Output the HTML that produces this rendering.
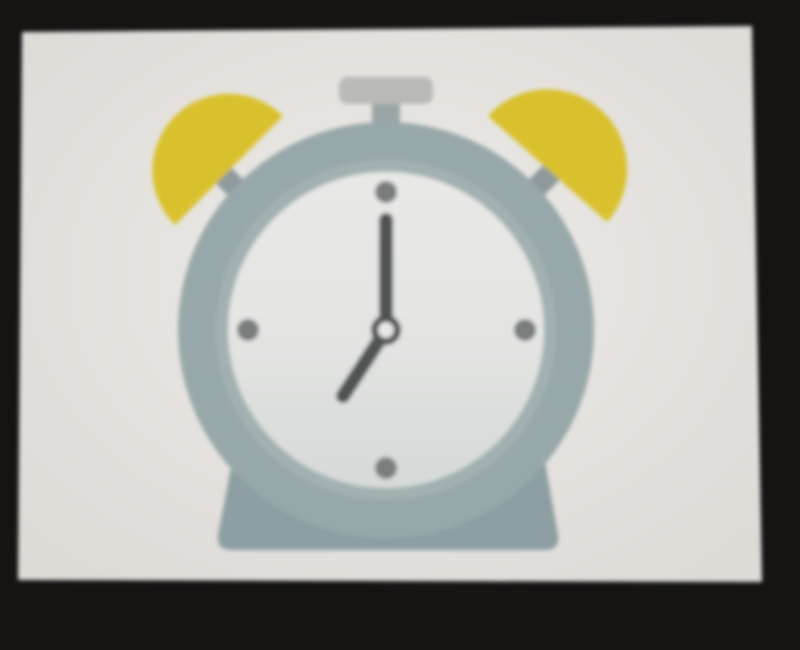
<!DOCTYPE html>
<html><head><style>
html,body{margin:0;padding:0;background:#151413;width:800px;height:650px;overflow:hidden}
</style></head><body>
<svg width="800" height="650" viewBox="0 0 800 650" xmlns="http://www.w3.org/2000/svg">
<defs>
<radialGradient id="bg" cx="50%" cy="45%" r="70%">
<stop offset="0" stop-color="#ecebe8"/><stop offset="1" stop-color="#dedad6"/>
</radialGradient>
<linearGradient id="face" x1="0" y1="0" x2="0" y2="1">
<stop offset="0" stop-color="#e8e8e6"/><stop offset="0.5" stop-color="#e4e5e3"/><stop offset="1" stop-color="#d6d9d8"/>
</linearGradient>
<filter id="bl"><feGaussianBlur stdDeviation="2"/></filter>
</defs>
<rect width="800" height="650" fill="#151413"/>
<polygon points="22,32 752,26 762,582 18,580" fill="url(#bg)" filter="url(#bl)"/>
<g filter="url(#bl)">
<!-- bell posts -->
<rect x="222" y="165" width="22" height="40" fill="#8e9a9b" transform="rotate(-45 233 185)"/>
<rect x="528" y="165" width="22" height="40" fill="#8e9a9b" transform="rotate(45 539 185)"/>
<!-- bells -->
<path d="M175,225 A76,76 0 0 1 283,116 Z" fill="#d9c12e"/>
<path d="M488,116 A76,76 0 0 1 607,222 Z" fill="#d9c12e"/>
<!-- top button -->
<rect x="372" y="98" width="28" height="34" fill="#9aa5a6"/>
<rect x="339" y="77" width="94" height="27" rx="9" fill="#b9b9b5"/>
<!-- base -->
<path d="M232,462 L545,462 L558,535 Q560,550 545,550 L232,550 Q216,550 218,535 Z" fill="#8d9fa3"/>
<!-- outer ring -->
<circle cx="386" cy="330" r="208" fill="#98a7a9"/>
<circle cx="386" cy="330" r="170" fill="#a3b0b1"/>
<circle cx="386" cy="330" r="158" fill="url(#face)"/>
<!-- markers -->
<circle cx="386" cy="192" r="11" fill="#7a7d7d"/>
<circle cx="248" cy="330" r="11" fill="#7a7d7d"/>
<circle cx="525" cy="330" r="11" fill="#7a7d7d"/>
<circle cx="386" cy="468" r="11" fill="#7a7d7d"/>
<!-- hands -->
<line x1="386" y1="330" x2="386" y2="220" stroke="#505352" stroke-width="14" stroke-linecap="round"/>
<line x1="386" y1="330" x2="343" y2="396" stroke="#505352" stroke-width="14" stroke-linecap="round"/>
<circle cx="386" cy="330" r="15" fill="#505352"/>
<circle cx="386" cy="330" r="8" fill="#e8e8e6"/>
</g>
</svg>
</body></html>
